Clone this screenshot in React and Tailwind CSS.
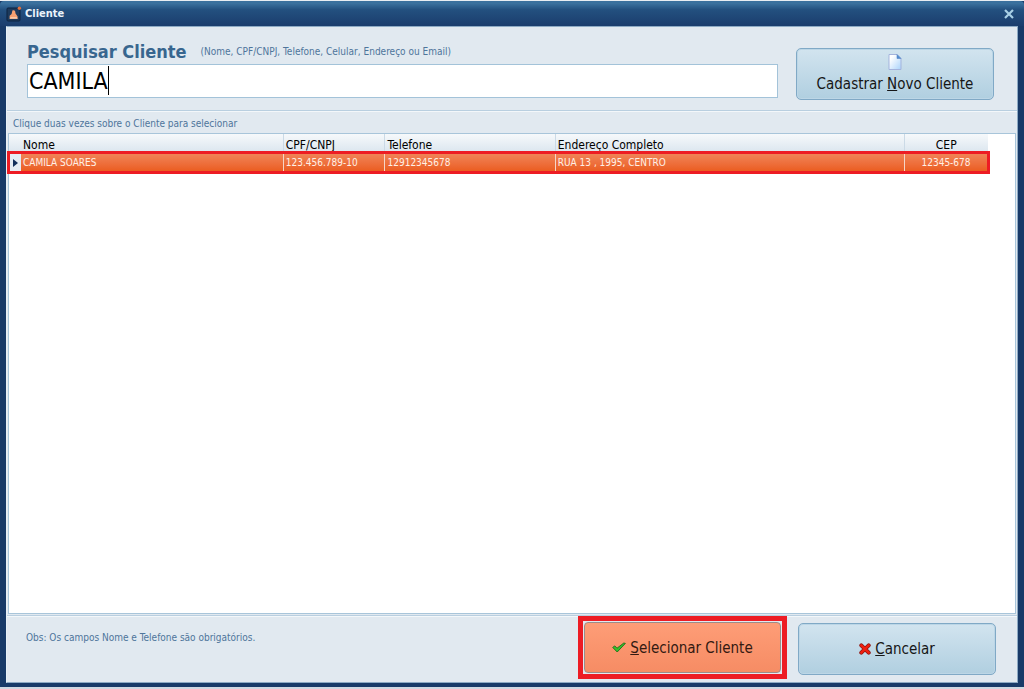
import React, { useState } from "react";

function AppIcon() {
  return (
    <svg viewBox="0 0 16 16" className="h-4 w-4 shrink-0" aria-hidden="true">
      <rect x="1" y="2" width="13" height="13" rx="1" fill="#1d3a5c" stroke="#0c2340" />
      <path d="M6.4 4.6 C8.4 3.6 9.6 5 9.4 7.2 L11.6 10.6 V12.8 H3.6 V9.8 L5.6 8 Z" fill="#f6a071" />
      <path d="M4.6 11 H10.8 L11.6 12.8 H3.6 Z" fill="#fbc9a6" />
      <circle cx="13.4" cy="2.2" r="1.7" fill="#e2713c" />
    </svg>
  );
}

function PageIcon() {
  return (
    <svg viewBox="0 0 14 16" className="h-4 w-3.5" aria-hidden="true">
      <defs>
        <linearGradient id="page" x1="0" y1="0" x2="1" y2="1">
          <stop offset="0.2" stopColor="#ffffff" />
          <stop offset="1" stopColor="#a9d3fb" />
        </linearGradient>
      </defs>
      <path d="M1 0.5 H9 L13 4.5 V15.5 H1 Z" fill="url(#page)" stroke="#a3b3dc" />
      <path d="M9 0.5 L13 4.5 H9 Z" fill="#4f8cd0" stroke="#5a86c6" strokeWidth="0.6" />
    </svg>
  );
}

function CheckIcon() {
  return (
    <svg viewBox="0 0 14 11" className="h-[11px] w-3.5 shrink-0" aria-hidden="true">
      <path d="M0.7 5.4 L2.8 3.9 L5 6.2 L11.8 1 L13.4 1.4 L5.2 10 Z" fill="#35c02c" stroke="#1f6d1b" strokeWidth="0.9" strokeLinejoin="round" />
    </svg>
  );
}

function CrossIcon() {
  return (
    <svg viewBox="0 0 12 12" className="h-3 w-3 shrink-0" aria-hidden="true">
      <path d="M2.3 2.3 L9.7 9.7 M9.7 2.3 L2.3 9.7" stroke="#8e1410" strokeWidth="4" strokeLinecap="round" />
      <path d="M2.3 2.3 L9.7 9.7 M9.7 2.3 L2.3 9.7" stroke="#f0200f" strokeWidth="2.5" strokeLinecap="round" />
    </svg>
  );
}

const clients = [
  {
    nome: "CAMILA SOARES",
    cpf: "123.456.789-10",
    telefone: "12912345678",
    endereco: "RUA 13 , 1995, CENTRO",
    cep: "12345-678",
  },
];

const smallText = "text-[10px] leading-4";
const buttonText = "text-[15px] leading-5";
const blueButton =
  "rounded-[5px] border border-[#80a9c6] bg-linear-to-b from-[#d2e4ef] to-[#b0cfe0] text-[#161616] shadow-[inset_0_0_0_1px_#bcd6e6]";

export default function App() {
  const [query, setQuery] = useState("CAMILA");

  return (
    <div className="flex h-screen flex-col border-t border-b-2 border-t-[#e8edf2] border-b-[#cfd8e2] bg-[#183a68] font-['DejaVu_Sans_Condensed','DejaVu_Sans',sans-serif] text-xs text-[#4e759b]">
      <header className="flex h-[25px] shrink-0 items-center justify-between rounded-t bg-linear-to-b from-[#3a709d] from-10% via-[#23507f] via-35% to-[#1b3d6d] pr-2.5 pl-1.5">
        <div className="flex items-center gap-[3px]">
          <AppIcon />
          <h1 className="text-[11px] leading-4 font-bold text-[#eaf3fa]">Cliente</h1>
        </div>
        <button type="button" aria-label="Fechar">
          <svg viewBox="0 0 10 10" className="h-2.5 w-2.5" aria-hidden="true">
            <path d="M1 1 L9 9 M9 1 L1 9" stroke="#a9d0e6" strokeWidth="2.2" />
          </svg>
        </button>
      </header>

      <main className="mx-1.5 mb-1 flex min-h-0 flex-1 flex-col border border-[#8daac4] border-l-[#e8f1f7] bg-[#e1e9f0]">
        <section className="flex items-start gap-[18px] border-b border-[#b9cfe0] pt-[13px] pr-[23px] pb-2.5 pl-5">
          <div className="min-w-0 flex-1">
            <div className="flex h-6 items-center gap-3.5">
              <label htmlFor="busca" className="text-lg font-bold text-[#38668f]">
                Pesquisar Cliente
              </label>
              <span className={smallText}>(Nome, CPF/CNPJ, Telefone, Celular, Endereço ou Email)</span>
            </div>
            <div className="relative">
              <input
                id="busca"
                type="text"
                value={query}
                onChange={(e) => setQuery(e.target.value)}
                className="block h-[34px] w-full border border-[#a3c3d9] bg-white px-px text-[23px] text-black caret-transparent outline-none"
              />
              <div className="pointer-events-none absolute top-0.5 left-0.5 flex h-[29px] items-center border-r border-black text-[23px]" aria-hidden="true">
                <span className="invisible">{query}</span>
              </div>
            </div>
          </div>
          <button type="button" className={`mt-2 flex h-[52px] w-[198px] shrink-0 flex-col items-center justify-center gap-1 ${buttonText} ${blueButton}`}>
            <PageIcon />
            <span>
              Cadastrar <u>N</u>ovo Cliente
            </span>
          </button>
        </section>

        <p className={`h-[22px] shrink-0 border-t border-[#f3f7fa] pt-1 pl-1.5 ${smallText}`}>
          Clique duas vezes sobre o Cliente para selecionar
        </p>

        <section className="mx-px mb-px flex min-h-0 flex-1 flex-col border border-[#a8c5da] bg-white pr-[27px]">
          <table className="w-full table-fixed border-collapse text-left">
            <colgroup>
              <col className="w-3" />
              <col className="w-[26.8%]" />
              <col className="w-[10.4%]" />
              <col className="w-[17.4%]" />
              <col />
              <col className="w-[83px]" />
            </colgroup>
            <thead>
              <tr className="h-[19px] bg-linear-to-b from-[#f6f9fb] to-[#dae5ee] align-bottom leading-4 text-black">
                <td />
                <th scope="col" className="px-0.5 font-normal">Nome</th>
                <th scope="col" className="border-l border-[#cbdae6] px-0.5 font-normal">CPF/CNPJ</th>
                <th scope="col" className="border-l border-[#cbdae6] px-0.5 font-normal">Telefone</th>
                <th scope="col" className="border-l border-[#cbdae6] px-0.5 font-normal">Endereço Completo</th>
                <th scope="col" className="border-l border-[#cbdae6] text-center font-normal">CEP</th>
              </tr>
            </thead>
            <tbody>
              {clients.map((c) => (
                <tr
                  key={c.cpf}
                  className={`h-[19px] border-y border-[#f0a88a] bg-linear-to-b from-[#f08356] to-[#eb5d1f] text-[#fff0e6] outline-3 -outline-offset-1 outline-[#ed1c24] ${smallText}`}
                >
                  <td className="bg-[#e4edf4]">
                    <svg viewBox="0 0 5 8" className="ml-1 h-2 w-[5px]" aria-hidden="true">
                      <path d="M0 0 L5 4 L0 8 Z" fill="#12305c" />
                    </svg>
                  </td>
                  <td className="px-0.5">{c.nome}</td>
                  <td className="border-l border-[#f5d5c7] px-0.5">{c.cpf}</td>
                  <td className="border-l border-[#f5d5c7] px-0.5">{c.telefone}</td>
                  <td className="border-l border-[#f5d5c7] px-0.5">{c.endereco}</td>
                  <td className="border-x border-[#f5d5c7] text-center">{c.cep}</td>
                </tr>
              ))}
            </tbody>
          </table>
        </section>

        <footer className="flex h-[67px] shrink-0 items-start border-t border-[#b9cfe0] pr-[21px] pl-[19px] shadow-[inset_0_1px_0_#f3f7fa]">
          <p className={`mt-3.5 flex-1 ${smallText}`}>Obs: Os campos Nome e Telefone são obrigatórios.</p>
          <div className="mr-[11px] border-5 border-[#ed1c24] bg-[#e1e9f0] p-px">
            <button
              type="button"
              className={`flex h-[51px] w-[197px] items-center justify-center gap-1 rounded border border-[#9c8c88] bg-linear-to-b from-[#fe9d77] to-[#f68c64] text-[#331a12] ${buttonText}`}
            >
              <CheckIcon />
              <span>
                <u>S</u>elecionar Cliente
              </span>
            </button>
          </div>
          <button type="button" className={`mt-[7px] flex h-[52px] w-[198px] items-center justify-center gap-1 ${buttonText} ${blueButton}`}>
            <CrossIcon />
            <span>
              <u>C</u>ancelar
            </span>
          </button>
        </footer>
      </main>
    </div>
  );
}
